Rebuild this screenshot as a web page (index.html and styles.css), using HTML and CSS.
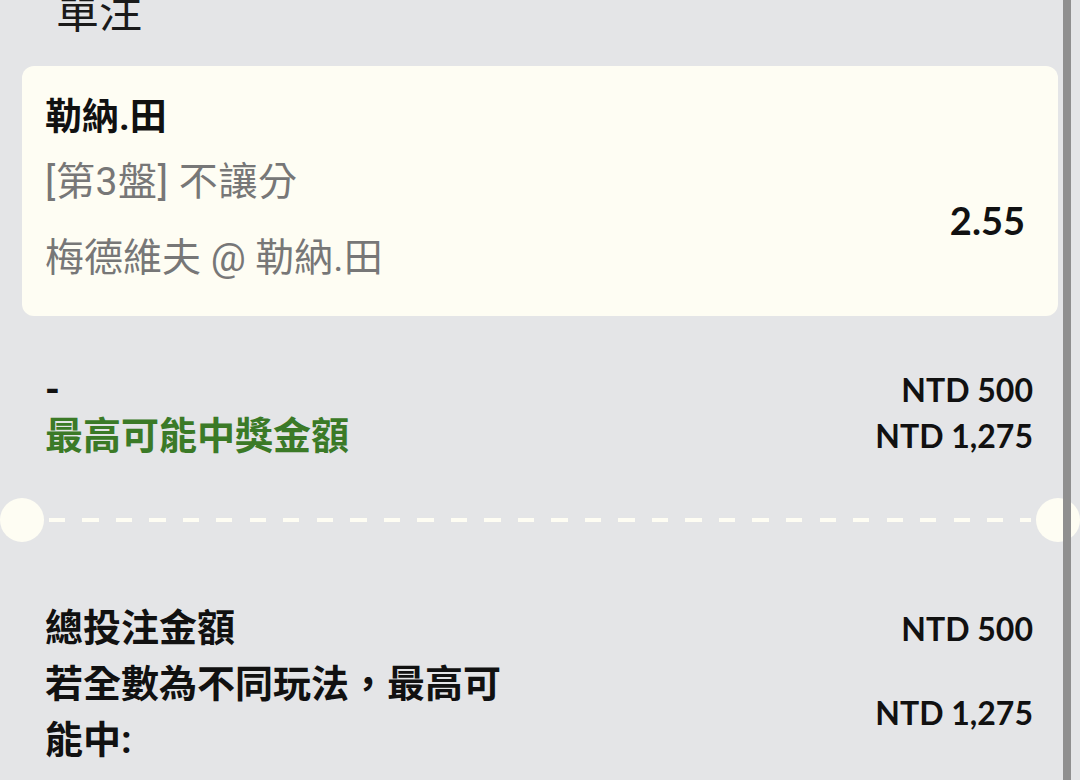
FILE: index.html
```html
<!DOCTYPE html>
<html lang="zh-Hant">
<head>
    <meta charset="UTF-8">
    <meta name="viewport" content="width=device-width, initial-scale=1.0">
    <title>單注</title>
    <link rel="stylesheet" href="styles.css">
</head>
<body>
    <div class="slip">
        <h1 class="slip-title">單注</h1>

        <div class="bet-card">
            <div class="bet-player">勒納.田</div>
            <div class="bet-row">
                <div class="bet-info">
                    <div class="bet-market">[第3盤] 不讓分</div>
                    <div class="bet-match">梅德維夫 @ 勒納.田</div>
                </div>
                <div class="bet-odds">2.55</div>
            </div>
        </div>

        <div class="stake">
            <div class="stake-label">-</div>
            <div class="amount">NTD 500</div>
            <div class="stake-label win">最高可能中獎金額</div>
            <div class="amount">NTD 1,275</div>
        </div>

        <div class="divider">
            <span class="notch"></span>
            <span class="dash"></span>
            <span class="notch"></span>
        </div>

        <div class="summary">
            <div class="summary-label">總投注金額</div>
            <div class="amount">NTD 500</div>
            <div class="summary-label">若全數為不同玩法，最高可能中:</div>
            <div class="amount">NTD 1,275</div>
        </div>
    </div>

    <div class="scrollbar"></div>
</body>
</html>
```

FILE: styles.css
```css
body {
    margin: 0;
    background-color: #e4e5e7;
    font-family: Roboto, "Noto Sans CJK TC", sans-serif;
    color: #111;
    overflow: hidden;
}

.slip {
    width: 1080px;
}

.slip-title {
    margin: -17px 0 0 0;
    padding-left: 56px;
    height: 83px;
    font-size: 43px;
    font-weight: 400;
    line-height: 60px;
    color: #1a1a1a;
}

.bet-card {
    margin: 0 22px;
    padding: 27px 33px 33px 23px;
    background-color: #fefdf3;
    border-radius: 12px;
}

.bet-player {
    font-size: 37px;
    font-weight: 700;
    line-height: 50px;
    margin-bottom: 14px;
}

.bet-row {
    display: flex;
    justify-content: space-between;
    align-items: center;
}

.bet-market, .bet-match {
    font-size: 39px;
    line-height: 50px;
    color: #777;
}

.bet-market {
    margin-bottom: 26px;
    letter-spacing: 0.6px;
}

.bet-odds {
    font-family: Lato, sans-serif;
    font-size: 38px;
    font-weight: 700;
}

.stake {
    display: grid;
    grid-template-columns: 1fr auto;
    padding: 51px 47px 0 45px;
    line-height: 46px;
}

.stake-label {
    font-size: 38px;
    font-weight: 700;
}

.stake-label.win {
    color: #3b7a27;
}

.amount {
    font-family: Lato, sans-serif;
    font-size: 32px;
    font-weight: 700;
    text-align: right;
    align-self: center;
}

.divider {
    display: flex;
    align-items: center;
    margin-top: 39px;
    height: 44px;
}

.notch {
    width: 44px;
    height: 44px;
    border-radius: 50%;
    background-color: #fefdf3;
    flex-shrink: 0;
}

.dash {
    flex: 1;
    height: 4px;
    margin: 0 5px;
    background: repeating-linear-gradient(90deg, #fefdf3 0 16px, transparent 16px 33.5px);
}

.summary {
    display: grid;
    grid-template-columns: 470px 1fr;
    padding: 58px 47px 0 45px;
}

.summary-label {
    font-size: 38px;
    font-weight: 700;
    line-height: 56px;
}

.scrollbar {
    position: fixed;
    top: 0;
    right: 9px;
    width: 8px;
    height: 100%;
    background-color: #8f8f8f;
}
```
